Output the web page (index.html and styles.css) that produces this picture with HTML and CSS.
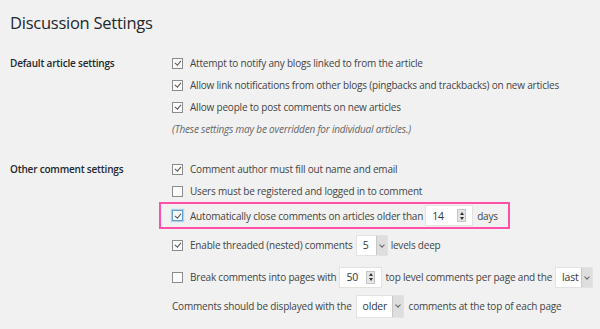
FILE: index.html
```html
<!DOCTYPE html>
<html lang="en">
<head>
  <meta charset="UTF-8">
  <title>Discussion Settings</title>
  <link rel="stylesheet" href="styles.css">
</head>
<body>
  <div id="wrap">
    <h1 class="page-title">Discussion Settings</h1>

    <div class="section first">
      <div class="label">Default article settings</div>
      <div class="fields">
        <div class="line"><span class="box checked"></span>Attempt to notify any blogs linked to from the article</div>
        <div class="line"><span class="box checked"></span>Allow link notifications from other blogs (pingbacks and trackbacks) on new articles</div>
        <div class="line"><span class="box checked"></span>Allow people to post comments on new articles</div>
        <div class="line note">(These settings may be overridden for individual articles.)</div>
      </div>
    </div>

    <div class="section">
      <div class="label">Other comment settings</div>
      <div class="fields">
        <div class="line"><span class="box checked"></span>Comment author must fill out name and email</div>
        <div class="line"><span class="box"></span>Users must be registered and logged in to comment</div>
        <div class="line highlight"><span class="box checked focus"></span>Automatically close comments on articles older than <span class="num w-14">14<span class="spin"></span></span> days</div>
        <div class="line tall t1"><span class="box checked"></span>Enable threaded (nested) comments <span class="sel w-5">5<span class="arrow"></span></span> levels deep</div>
        <div class="line tall t2"><span class="box"></span>Break comments into pages with <span class="num w-50">50<span class="spin"></span></span> top level comments per page and the <span class="sel w-last">last<span class="arrow"></span></span></div>
        <div class="line tall t3 plain">Comments should be displayed with the <span class="sel w-older">older<span class="arrow"></span></span> comments at the top of each page</div>
      </div>
    </div>
  </div>
</body>
</html>
```

FILE: styles.css
```css
body {
  margin: 0;
  background: #f1f1f1;
  color: #444;
  font-family: "Open Sans", "Noto Sans", sans-serif;
  font-size: 10px;
  letter-spacing: -0.2px;
}

#wrap {
  padding: 10px 10px 0 10px;
}

.page-title {
  margin: 0;
  font-size: 16.5px;
  font-weight: 400;
  letter-spacing: -0.25px;
  line-height: 26px;
  color: #23282d;
}

.section {
  display: grid;
  grid-template-columns: 162px 1fr;
}

.section.first {
  margin-top: 16px;
}

.section + .section {
  margin-top: 18px;
}

.label {
  font-weight: 600;
  font-size: 10px;
  letter-spacing: -0.2px;
  color: #23282d;
  line-height: 22px;
}

.line {
  display: flex;
  align-items: center;
  height: 22px;
  white-space: nowrap;
}

.note {
  font-style: italic;
  color: #666;
}

.box {
  width: 9px;
  height: 9px;
  border: 1px solid #8c8c8c;
  background: #fbfbfb;
  margin-right: 7px;
  position: relative;
  flex: none;
}

.box.checked::after {
  content: "";
  position: absolute;
  left: 2.5px;
  top: 0.5px;
  width: 2.5px;
  height: 5px;
  border: solid #555;
  border-width: 0 1.2px 1.2px 0;
  transform: rotate(40deg);
}

.box.focus {
  border-color: #5b9dd9;
  box-shadow: 0 0 1px 1px rgba(30, 140, 190, 0.3);
}

.highlight {
  height: 23px;
  width: fit-content;
  margin-left: -13px;
  padding: 0 10px 0 11px;
  border: 2px solid #ff4fa8;
}

.tall { height: 26px; }
.t1 { margin-top: 3px; }
.t2 { margin-top: 6px; }
.t3 { margin-top: 3px; }

.num,
.sel {
  position: relative;
  display: inline-flex;
  align-items: center;
  height: 21px;
  box-sizing: border-box;
  padding-left: 6px;
  margin: 0 3px;
  background: #fff;
  border: 1px solid #e2e2e2;
  color: #32373c;
  font-size: 10.5px;
}

.w-14 { width: 48px; margin-left: 2px; margin-right: 4px; }
.w-50 { width: 43px; }
.w-5 { width: 32px; }
.w-last { width: 38px; }
.w-older { width: 48px; height: 23px; margin: 0 5px 0 4px; }

.spin {
  position: absolute;
  right: 6px;
  top: 3px;
  width: 9px;
  height: 13px;
  background: #e5e5e5;
  border: 1px solid #c6c6c6;
  box-sizing: border-box;
}

.spin::before,
.spin::after {
  content: "";
  position: absolute;
  left: 1.5px;
  border-left: 2.5px solid transparent;
  border-right: 2.5px solid transparent;
}

.spin::before {
  top: 1.5px;
  border-bottom: 3px solid #333;
}

.spin::after {
  bottom: 1.5px;
  border-top: 3px solid #333;
}

.arrow {
  position: absolute;
  right: 0;
  top: 0;
  bottom: 0;
  width: 10px;
  background: #dedede;
  border-left: 1px solid #c8c8c8;
}

.arrow::after {
  content: "";
  position: absolute;
  left: 3px;
  top: 7px;
  width: 3px;
  height: 3px;
  border: solid #666;
  border-width: 0 1px 1px 0;
  transform: rotate(45deg);
}
```
